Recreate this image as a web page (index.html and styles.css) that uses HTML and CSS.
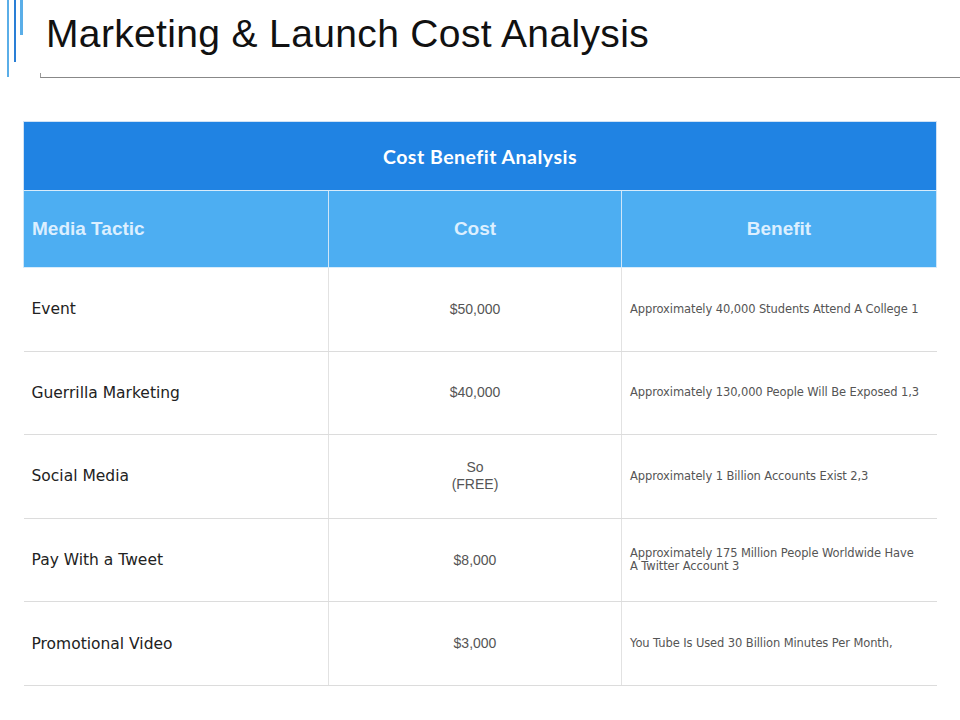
FILE: index.html
```html
<!DOCTYPE html>
<html>
<head>
<meta charset="utf-8">
<link rel="stylesheet" href="styles.css">
</head>
<body>
<div class="slide">
  <header class="top">
    <div class="bars">
      <span class="bar bar-a"></span>
      <span class="bar bar-b"></span>
      <span class="bar bar-c"></span>
    </div>
    <div class="title-wrap">
      <h1 class="title">Marketing &amp; Launch Cost Analysis</h1>
      <div class="rule"></div>
    </div>
  </header>
  <main class="content">
    <table class="cba">
      <colgroup>
        <col class="w1">
        <col class="w2">
        <col class="w3">
      </colgroup>
      <thead>
        <tr class="h1row"><th colspan="3">Cost Benefit Analysis</th></tr>
        <tr class="h2row">
          <th class="c1">Media Tactic</th>
          <th class="c2">Cost</th>
          <th class="c3">Benefit</th>
        </tr>
      </thead>
      <tbody>
        <tr><td class="c1">Event</td><td class="c2">$50,000</td><td class="c3">Approximately 40,000 Students Attend A College 1</td></tr>
        <tr><td class="c1">Guerrilla Marketing</td><td class="c2">$40,000</td><td class="c3">Approximately 130,000 People Will Be Exposed 1,3</td></tr>
        <tr><td class="c1">Social Media</td><td class="c2">So<br>(FREE)</td><td class="c3">Approximately 1 Billion Accounts Exist 2,3</td></tr>
        <tr><td class="c1">Pay With a Tweet</td><td class="c2">$8,000</td><td class="c3">Approximately 175 Million People Worldwide Have A Twitter Account 3</td></tr>
        <tr><td class="c1">Promotional Video</td><td class="c2">$3,000</td><td class="c3">You Tube Is Used 30 Billion Minutes Per Month,</td></tr>
      </tbody>
    </table>
  </main>
</div>
</body>
</html>
```
FILE: styles.css
```css
* { box-sizing: border-box; }
html, body { margin: 0; padding: 0; background: #fff; }
.slide {
  width: 960px;
  height: 720px;
  position: relative;
  font-family: "Liberation Sans", Arial, sans-serif;
  overflow: hidden;
}
.top {
  display: flex;
  height: 121px;
}
.bars {
  display: flex;
  align-items: flex-start;
  padding-left: 7px;
  width: 40px;
  flex: 0 0 40px;
}
.bar { display: block; flex: 0 0 auto; }
.bar-a { width: 2px; height: 77px; background: #5aaee8; }
.bar-b { width: 2px; height: 62px; background: #2a7fd6; margin-left: 5px; }
.bar-c { width: 3px; height: 35px; background: #5aaee8; margin-left: 4px; }
.title-wrap { flex: 1; }
.title {
  margin: 0;
  padding: 11px 0 0 6px;
  height: 73px;
  font-family: "Liberation Sans", Arial, sans-serif;
  font-weight: normal;
  font-size: 39px;
  line-height: 46px;
  color: #111;
  letter-spacing: 0.35px;
}
.rule {
  height: 5px;
  border-left: 1px solid #999;
  border-bottom: 1px solid #888;
}
.content { padding-left: 23px; }
.cba {
  border-collapse: collapse;
  width: 913px;
  table-layout: fixed;
}
.w1 { width: 305px; }
.w2 { width: 293px; }
.w3 { width: 315px; }
.cba th, .cba td { padding: 0; }
.h1row th {
  height: 69px;
  background: #2083e3;
  color: #fff;
  font-family: "Lato", "Liberation Sans", sans-serif;
  font-weight: bold;
  font-size: 19.5px;
  letter-spacing: 0.5px;
  text-align: center;
  border: 1px solid #cfe2f5;
  border-bottom: 1px solid #d8ecfb;
}
.h2row th {
  height: 77px;
  background: #4daef2;
  color: #dcefff;
  font-family: "Liberation Sans", Arial, sans-serif;
  font-weight: bold;
  font-size: 19px;
  border-left: 1px solid #cfe6f8;
  border-right: 1px solid #cfe6f8;
  border-bottom: 1px solid #d8ecfb;
}
.h2row .c1 { text-align: left; padding-left: 8px; }
.h2row .c2, .h2row .c3 { text-align: center; }
tbody td {
  height: 83.6px;
  border-bottom: 1px solid #dcdcdc;
  vertical-align: middle;
}
tbody td + td { border-left: 1px solid #e2e2e2; }
tbody .c1 {
  padding-left: 8px;
  font-family: "DejaVu Sans", sans-serif;
  font-size: 15.5px;
  color: #222;
}
tbody .c2 {
  text-align: center;
  font-family: "Liberation Sans", Arial, sans-serif;
  font-size: 14px;
  color: #555;
  line-height: 17px;
}
tbody .c3 {
  padding-left: 8px;
  padding-right: 14px;
  font-family: "DejaVu Sans", sans-serif;
  font-size: 11.5px;
  letter-spacing: -0.1px;
  color: #555;
  line-height: 13px;
}
```
